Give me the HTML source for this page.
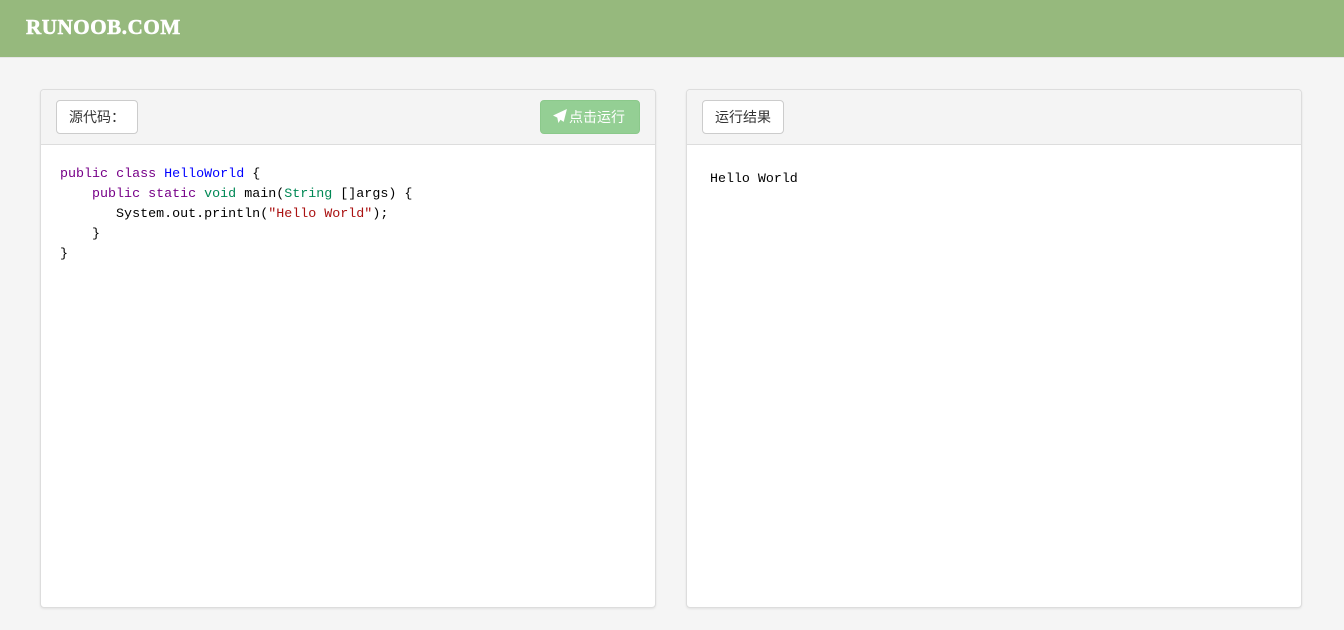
<!DOCTYPE html>
<html><head><meta charset="utf-8"><style>
*{box-sizing:border-box;margin:0;padding:0}
body{width:1344px;height:630px;background:#f5f5f5;font-family:"Liberation Sans","Noto Sans CJK SC",sans-serif;overflow:hidden;position:relative}
.top{height:58px;background:#96b97d;border-bottom:1px solid #e6e6e6}
.logo{position:absolute;left:26px;top:15px;color:#fff;font:900 21px "Liberation Serif",serif;letter-spacing:0.6px;-webkit-text-stroke:0.6px #fff}
.panel{position:absolute;top:89px;width:616px;height:519px;background:#fff;border:1px solid #ddd;border-radius:4px;box-shadow:0 1px 2px rgba(0,0,0,.08)}
.ph{height:55px;background:#f4f4f4;border-bottom:1px solid #ddd;border-radius:4px 4px 0 0;position:relative}
.btn{position:absolute;top:10px;height:34px;border:1px solid #ccc;border-radius:4px;background:#fff;font-size:14px;line-height:32px;padding:0 12px;color:#333}
.run{background:#94cf94;border-color:#8bc98b;color:#fff;right:15px;width:100px;padding:0 0 0 12px}
pre{font-family:"Liberation Mono","DejaVu Sans Mono",monospace;font-size:13.35px;line-height:20px;padding:20px 0 0 19px;color:#000}
.k{color:#708}.t{color:#085}.d{color:#00f}.s{color:#a11}
.out{font-family:"Liberation Mono",monospace;font-size:13.3px;padding:26px 0 0 23px;color:#000}
</style></head><body>
<div class="top"></div><div class="logo">RUNOOB.COM</div>
<div class="panel" style="left:40px">
<div class="ph"><div class="btn" style="left:15px">源代码：</div>
<div class="btn run"><svg width="15" height="14" viewBox="0 0 14 13" style="vertical-align:-1px;margin-right:1px"><path d="M13 0L0 6l4 2 1 5 2-3 3 2z" fill="#fff"/></svg>点击运行</div></div>
<pre><span class="k">public</span> <span class="k">class</span> <span class="d">HelloWorld</span> {
    <span class="k">public</span> <span class="k">static</span> <span class="t">void</span> main(<span class="t">String</span> []args) {
       System.out.println(<span class="s">"Hello World"</span>);
    }
}</pre>
</div>
<div class="panel" style="left:686px">
<div class="ph"><div class="btn" style="left:15px">运行结果</div></div>
<div class="out">Hello World</div>
</div>
</body></html>
